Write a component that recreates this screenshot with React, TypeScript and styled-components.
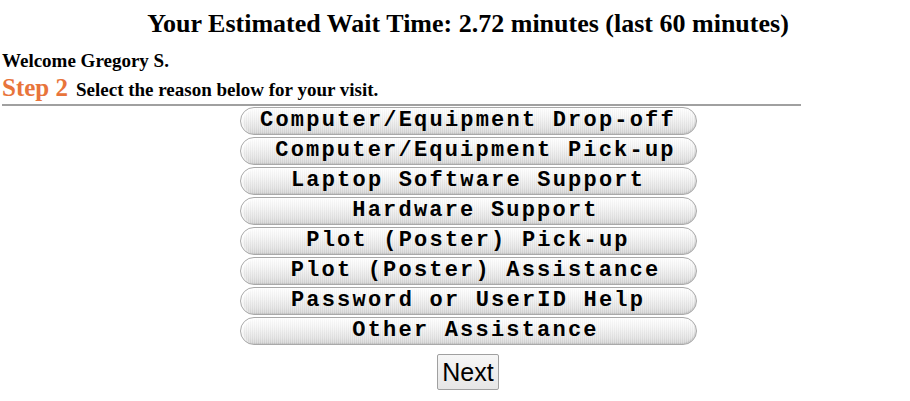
import React from "react";
import styled, { createGlobalStyle } from "styled-components";

const Global = createGlobalStyle`
  html, body { margin: 0; padding: 0; background: #fff; }
  body { font-family: "Liberation Serif", "Times New Roman", serif; color: #000; }
`;

const Page = styled.div`
  width: 936px;
  padding: 0 2px;
  box-sizing: border-box;
`;

const Title = styled.h2`
  margin: 8px 0 0 0;
  text-align: center;
  font-size: 26px;
  font-weight: bold;
  line-height: 32px;
`;

const Welcome = styled.div`
  margin-top: 10px;
  font-size: 19px;
  font-weight: bold;
  line-height: 22px;
`;

const StepLine = styled.div`
  display: flex;
  align-items: baseline;
  gap: 8px;
  line-height: 26px;
  margin-top: 3px;
`;

const StepLabel = styled.span`
  color: #e8743b;
  font-size: 25px;
  font-weight: bold;
`;

const StepText = styled.span`
  font-size: 19px;
  font-weight: bold;
`;

const Rule = styled.hr`
  width: 799px;
  margin: 1px 0 0 0;
  border: none;
  border-top: 2px solid #a0a0a0;
  height: 0;
`;

const Options = styled.div`
  display: flex;
  flex-direction: column;
  align-items: center;
  gap: 2px;
  margin-top: 1px;
`;

const Option = styled.button<{ $indent?: boolean }>`
  width: 457px;
  height: 28px;
  box-sizing: border-box;
  padding: 0 0 0 ${(p) => (p.$indent ? "15px" : "0")};
  border: 1px solid #a9a9a9;
  border-radius: 14px;
  background:
    repeating-linear-gradient(90deg, rgba(255,255,255,0.25) 0 1px, rgba(0,0,0,0.02) 1px 2px),
    linear-gradient(180deg, #ffffff 0%, #f4f4f4 35%, #e2e2e2 75%, #d0d0d0 100%);
  box-shadow: inset 2px 1px 2px rgba(255,255,255,0.9), inset -1px -1px 1px rgba(0,0,0,0.08);
  font-family: "Liberation Mono", "Courier New", monospace;
  font-weight: bold;
  font-size: 22px;
  letter-spacing: 2.2px;
  color: #000;
  line-height: 26px;
  text-align: center;
  white-space: pre;
  cursor: pointer;
`;

const NextRow = styled.div`
  display: flex;
  justify-content: center;
  margin-top: 9px;
`;

const NextButton = styled.button`
  height: 36px;
  padding: 0 4px;
  border: 1px solid #a0a0a0;
  border-radius: 2px;
  background: linear-gradient(180deg, #f6f6f6 0%, #e6e6e6 100%);
  font-family: "Liberation Sans", Arial, sans-serif;
  font-size: 25px;
  color: #000;
  line-height: 32px;
`;

const reasons: { label: string; indent: boolean }[] = [
  { label: "Computer/Equipment Drop-off", indent: false },
  { label: "Computer/Equipment Pick-up", indent: true },
  { label: "Laptop Software Support", indent: false },
  { label: "Hardware Support", indent: true },
  { label: "Plot (Poster) Pick-up", indent: false },
  { label: "Plot (Poster) Assistance", indent: true },
  { label: "Password or UserID Help", indent: false },
  { label: "Other Assistance", indent: true },
];

export default function App() {
  return (
    <Page>
      <Global />
      <Title>Your Estimated Wait Time: 2.72 minutes (last 60 minutes)</Title>
      <Welcome>Welcome Gregory S.</Welcome>
      <StepLine>
        <StepLabel>Step 2</StepLabel>
        <StepText>Select the reason below for your visit.</StepText>
      </StepLine>
      <Rule />
      <Options>
        {reasons.map((r) => (
          <Option key={r.label} $indent={r.indent}>
            {r.label}
          </Option>
        ))}
      </Options>
      <NextRow>
        <NextButton>Next</NextButton>
      </NextRow>
    </Page>
  );
}
